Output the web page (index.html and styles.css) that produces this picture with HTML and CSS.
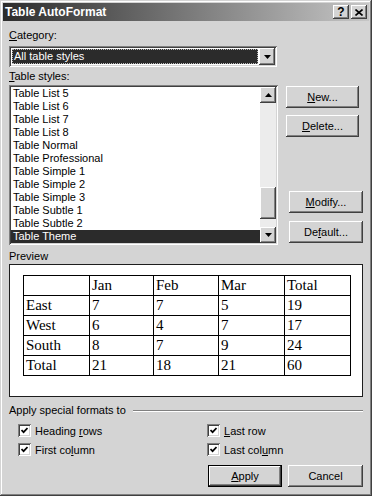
FILE: index.html
```html
<!DOCTYPE html>
<html>
<head>
<meta charset="utf-8">
<title>Table AutoFormat</title>
<link rel="stylesheet" href="styles.css">
</head>
<body>
<div class="window">
  <div class="titlebar">
    <span class="title">Table AutoFormat</span>
    <div class="tbtns">
      <span class="tbtn q">?</span>
      <span class="tbtn"><svg width="8" height="7" viewBox="0 0 8 7"><path d="M0.5 0.5 L7.5 6.5 M7.5 0.5 L0.5 6.5" stroke="#000" stroke-width="1.6"/></svg></span>
    </div>
  </div>
  <div class="content">
    <div class="label lbl-cat"><u>C</u>ategory:</div>
    <div class="combo">
      <div class="combo-field"><div class="combo-sel">All table styles</div></div>
      <div class="raised arrow-btn combo-btn"><svg width="7" height="4" viewBox="0 0 7 4"><polygon points="0,0 7,0 3.5,4" fill="#000"/></svg></div>
    </div>
    <div class="label lbl-styles"><u>T</u>able styles:</div>
    <div class="styles-row">
      <div class="listbox">
        <ul class="items">
          <li>Table List 5</li>
          <li>Table List 6</li>
          <li>Table List 7</li>
          <li>Table List 8</li>
          <li>Table Normal</li>
          <li>Table Professional</li>
          <li>Table Simple 1</li>
          <li>Table Simple 2</li>
          <li>Table Simple 3</li>
          <li>Table Subtle 1</li>
          <li>Table Subtle 2</li>
          <li class="sel">Table Theme</li>
        </ul>
        <div class="scrollbar">
          <div class="raised arrow-btn sb-btn"><svg width="7" height="4" viewBox="0 0 7 4"><polygon points="0,4 7,4 3.5,0" fill="#000"/></svg></div>
          <div class="sb-track"><div class="raised sb-thumb"></div></div>
          <div class="raised arrow-btn sb-btn"><svg width="7" height="4" viewBox="0 0 7 4"><polygon points="0,0 7,0 3.5,4" fill="#000"/></svg></div>
        </div>
      </div>
      <div class="side">
        <div class="raised btn btn-new"><span><u>N</u>ew...</span></div>
        <div class="raised btn btn-del"><span><u>D</u>elete...</span></div>
        <div class="raised btn btn-mod"><span><u>M</u>odify...</span></div>
        <div class="raised btn btn-def"><span>De<u>f</u>ault...</span></div>
      </div>
    </div>
    <div class="label lbl-preview">Preview</div>
    <div class="preview">
      <table class="ptable">
        <colgroup><col class="c1"><col class="c2"><col class="c3"><col class="c4"><col class="c5"></colgroup>
        <tr><td></td><td>Jan</td><td>Feb</td><td>Mar</td><td>Total</td></tr>
        <tr><td>East</td><td>7</td><td>7</td><td>5</td><td>19</td></tr>
        <tr><td>West</td><td>6</td><td>4</td><td>7</td><td>17</td></tr>
        <tr><td>South</td><td>8</td><td>7</td><td>9</td><td>24</td></tr>
        <tr><td>Total</td><td>21</td><td>18</td><td>21</td><td>60</td></tr>
      </table>
    </div>
    <div class="group-head"><span>Apply special formats to</span><span class="etch"></span></div>
    <div class="checks">
      <div class="check"><span class="box"><svg width="7" height="7" viewBox="0 0 7 7"><path d="M0.5 3 L2.6 5.2 L6.5 1" stroke="#000" stroke-width="1.7" fill="none"/></svg></span><span>Heading <u>r</u>ows</span></div>
      <div class="check"><span class="box"><svg width="7" height="7" viewBox="0 0 7 7"><path d="M0.5 3 L2.6 5.2 L6.5 1" stroke="#000" stroke-width="1.7" fill="none"/></svg></span><span><u>L</u>ast row</span></div>
      <div class="check"><span class="box"><svg width="7" height="7" viewBox="0 0 7 7"><path d="M0.5 3 L2.6 5.2 L6.5 1" stroke="#000" stroke-width="1.7" fill="none"/></svg></span><span>First co<u>l</u>umn</span></div>
      <div class="check"><span class="box"><svg width="7" height="7" viewBox="0 0 7 7"><path d="M0.5 3 L2.6 5.2 L6.5 1" stroke="#000" stroke-width="1.7" fill="none"/></svg></span><span>Last col<u>u</u>mn</span></div>
    </div>
    <div class="actions">
      <div class="btn btn-apply"><span><u>A</u>pply</span></div>
      <div class="raised btn btn-cancel"><span>Cancel</span></div>
    </div>
  </div>
</div>
</body>
</html>
```
FILE: styles.css
```css
html, body {
  margin: 0;
  padding: 0;
  background: #d4d4d4;
}
body {
  font-family: "Liberation Sans", Arial, sans-serif;
  font-size: 11px;
  color: #000;
}
u { text-decoration: underline; text-underline-offset: 1px; }

.window {
  width: 372px;
  height: 496px;
  box-sizing: border-box;
  padding: 3px;
  background: #d4d4d4;
  box-shadow: inset -1px -1px #404040, inset 1px 1px #d4d4d4,
              inset -2px -2px #808080, inset 2px 2px #ffffff;
}

.raised {
  background: #d4d4d4;
  box-shadow: inset -1px -1px #404040, inset 1px 1px #ffffff,
              inset -2px -2px #808080, inset 2px 2px #d4d4d4;
}

.titlebar {
  height: 18px;
  background: linear-gradient(to right, #2c2c2c, #c6c6c6);
  display: flex;
  align-items: center;
  justify-content: space-between;
  padding-left: 2px;
}
.title {
  color: #fff;
  font-weight: bold;
  font-size: 12px;
  line-height: 18px;
}
.tbtns {
  display: flex;
  gap: 2px;
  margin-right: 2px;
}
.tbtn {
  width: 16px;
  height: 14px;
  box-sizing: border-box;
  background: #d4d4d4;
  box-shadow: inset -1px -1px #404040, inset 1px 1px #ffffff,
              inset -2px -2px #808080, inset 2px 2px #d4d4d4;
  display: flex;
  align-items: center;
  justify-content: center;
}
.tbtn.q {
  font-weight: bold;
  font-size: 12px;
  line-height: 14px;
}

.content {
  padding: 0 6px;
}
.label {
  height: 13px;
  line-height: 13px;
}
.lbl-cat { margin-top: 8px; }
.lbl-styles { margin-top: 3px; margin-bottom: 2px; }
.lbl-preview { margin-top: 5px; margin-bottom: 1px; }

.combo {
  margin-top: 4px;
  width: 268px;
  height: 21px;
  box-sizing: border-box;
  padding: 2px;
  background: #fff;
  box-shadow: inset 1px 1px #808080, inset -1px -1px #ffffff,
              inset 2px 2px #404040, inset -2px -2px #d4d4d4;
  display: flex;
}
.combo-field {
  flex: 1;
  padding: 1px;
}
.combo-sel {
  height: 15px;
  background: #2b2b2b;
  color: #fff;
  outline: 1px dotted #bbb;
  outline-offset: -1px;
  padding-left: 2px;
  line-height: 15px;
}
.arrow-btn {
  display: flex;
  align-items: center;
  justify-content: center;
}
.combo-btn {
  width: 16px;
  height: 17px;
}

.styles-row {
  display: flex;
  align-items: flex-start;
}
.listbox {
  width: 269px;
  height: 160px;
  box-sizing: border-box;
  padding: 2px;
  background: #fff;
  box-shadow: inset 1px 1px #808080, inset -1px -1px #ffffff,
              inset 2px 2px #404040, inset -2px -2px #d4d4d4;
  display: flex;
}
.items {
  flex: 1;
  list-style: none;
  margin: 0;
  padding: 0;
}
.items li {
  height: 13px;
  line-height: 13px;
  padding-left: 2px;
  white-space: nowrap;
}
.items li.sel {
  background: #2b2b2b;
  color: #fff;
}
.scrollbar {
  width: 16px;
  display: flex;
  flex-direction: column;
}
.sb-btn {
  height: 16px;
}
.sb-track {
  flex: 1;
  background: #ececec;
}
.sb-thumb {
  margin-top: 84px;
  height: 32px;
}

.side {
  display: flex;
  flex-direction: column;
  margin-left: 8px;
}
.btn {
  width: 73px;
  height: 22px;
  box-sizing: border-box;
  display: flex;
  align-items: center;
  justify-content: center;
  line-height: 13px;
}
.btn-new { margin-top: 1px; }
.btn-del { margin-top: 7px; }
.btn-mod { margin-top: 54px; margin-left: 3px; width: 74px; }
.btn-def { margin-top: 8px; margin-left: 3px; width: 74px; }

.preview {
  height: 133px;
  box-sizing: border-box;
  background: #fff;
  border: 1px solid #1e1e1e;
  padding: 10px 0 0 13px;
}
.ptable {
  border-collapse: collapse;
  table-layout: fixed;
  width: 327px;
  font-family: "Liberation Serif", "Times New Roman", serif;
  font-size: 15px;
}
.ptable td {
  border: 1px solid #000;
  padding: 0 0 0 2px;
  line-height: 19px;
  height: 19px;
  white-space: nowrap;
}
.c1 { width: 66px; }
.c2 { width: 64px; }
.c3 { width: 65px; }
.c4 { width: 66px; }
.c5 { width: 66px; }

.group-head {
  margin-top: 7px;
  height: 13px;
  line-height: 13px;
  display: flex;
  align-items: center;
}
.etch {
  flex: 1;
  margin-left: 7px;
  border-top: 1px solid #808080;
  border-bottom: 1px solid #ffffff;
}

.checks {
  margin-top: 4px;
  padding-left: 9px;
  display: grid;
  grid-template-columns: 189px 1fr;
}
.check {
  height: 19px;
  display: flex;
  align-items: center;
  gap: 4px;
}
.box {
  width: 13px;
  height: 13px;
  box-sizing: border-box;
  background: #fff;
  box-shadow: inset 1px 1px #808080, inset -1px -1px #ffffff,
              inset 2px 2px #404040, inset -2px -2px #d4d4d4;
  display: flex;
  align-items: center;
  justify-content: center;
}

.actions {
  margin-top: 6px;
  display: flex;
  justify-content: flex-end;
  gap: 6px;
}
.btn-apply {
  width: 74px;
  background: #d4d4d4;
  box-shadow: inset 0 0 0 1px #000000, inset -2px -2px #404040,
              inset 2px 2px #ffffff, inset -3px -3px #808080;
}
.btn-cancel { width: 75px; }
```
